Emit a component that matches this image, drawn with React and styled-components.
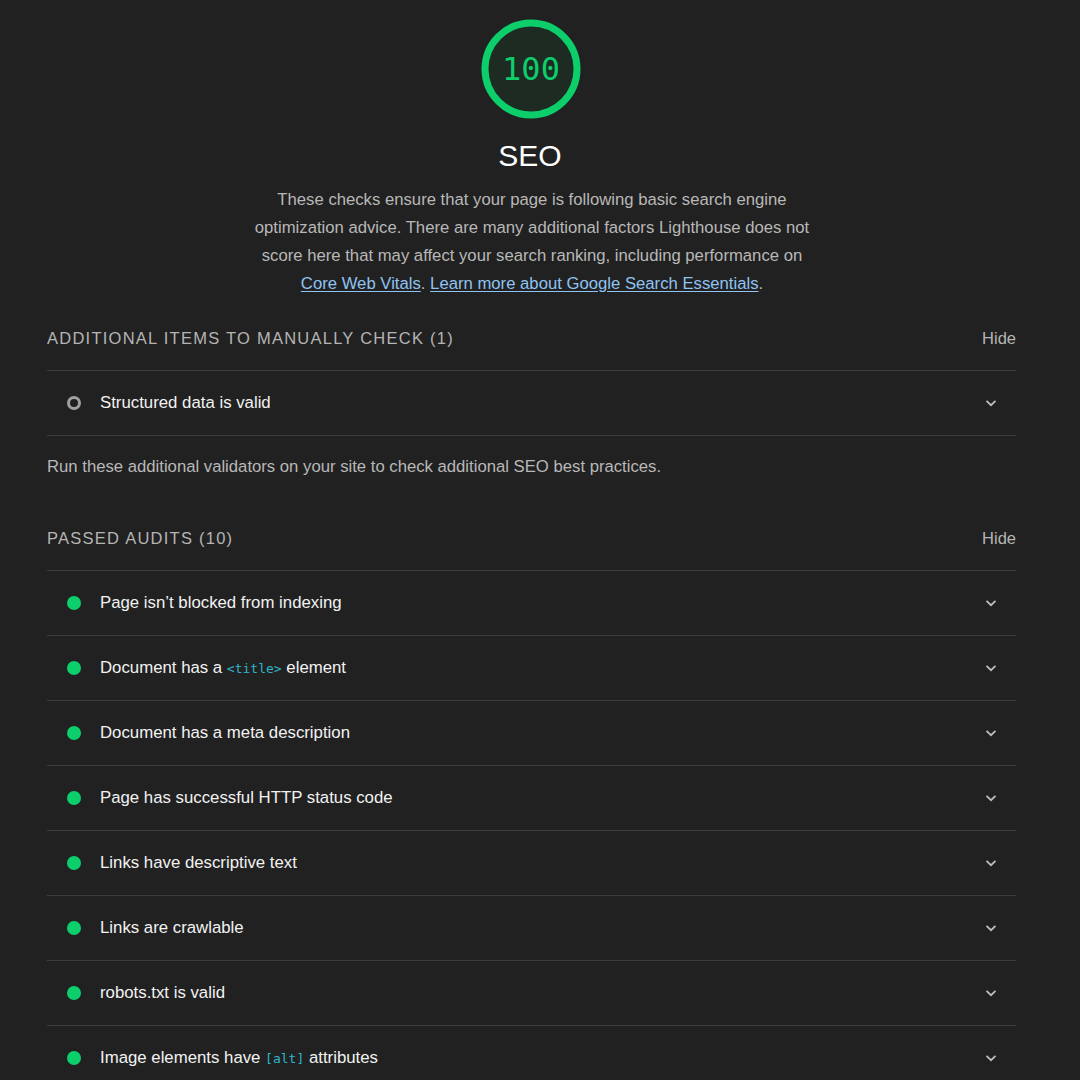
import React from "react";
import styled, { createGlobalStyle } from "styled-components";

const GlobalStyle = createGlobalStyle`
    html, body {
        margin: 0;
        padding: 0;
        background: #212121;
    }
    body {
        font-family: "Liberation Sans", Arial, sans-serif;
        color: #e0e0e0;
    }
`;

const MANUAL = [{ title: "Structured data is valid" }];

const PASSED = [
    { title: "Page isn’t blocked from indexing" },
    { title: ["Document has a ", { code: "<title>" }, " element"] },
    { title: "Document has a meta description" },
    { title: "Page has successful HTTP status code" },
    { title: "Links have descriptive text" },
    { title: "Links are crawlable" },
    { title: "robots.txt is valid" },
    { title: ["Image elements have ", { code: "[alt]" }, " attributes"] },
];

function Chevron() {
    return (
        <svg width="14" height="14" viewBox="0 0 14 14" fill="none">
            <path d="M2.5 4.8 L7 9.2 L11.5 4.8" stroke="#bdbdbd" strokeWidth="1.8" />
        </svg>
    );
}

function Title({ title }) {
    if (typeof title === "string") return title;
    return title.map((part, i) =>
        typeof part === "string" ? <span key={i}>{part}</span> : <Code key={i}>{part.code}</Code>
    );
}

function AuditRow({ audit, manual }) {
    return (
        <Row>
            <Marker $manual={manual} />
            <RowTitle>
                <Title title={audit.title} />
            </RowTitle>
            <ChevronBox>
                <Chevron />
            </ChevronBox>
        </Row>
    );
}

export default function App() {
    return (
        <>
            <GlobalStyle />
            <Page>
                <Header>
                    <Gauge>
                        <svg width="100" height="100" viewBox="0 0 100 100">
                            <circle cx="50" cy="50" r="46" fill="#1d2b23" stroke="#0cce6b" strokeWidth="7" />
                        </svg>
                        <GaugeValue>100</GaugeValue>
                    </Gauge>
                    <CategoryTitle>SEO</CategoryTitle>
                    <Description>
                        These checks ensure that your page is following basic search engine
                        optimization advice. There are many additional factors Lighthouse does not
                        score here that may affect your search ranking, including performance on{" "}
                        <Link href="#">Core Web Vitals</Link>. <Link href="#">Learn more about Google Search Essentials</Link>.
                    </Description>
                </Header>

                <Section>
                    <SectionHeader>
                        <SectionTitle>Additional items to manually check (1)</SectionTitle>
                        <HideLink>Hide</HideLink>
                    </SectionHeader>
                    <List>
                        {MANUAL.map((a, i) => (
                            <AuditRow key={i} audit={a} manual />
                        ))}
                    </List>
                    <SectionNote>Run these additional validators on your site to check additional SEO best practices.</SectionNote>
                </Section>

                <Section>
                    <SectionHeader>
                        <SectionTitle>Passed audits (10)</SectionTitle>
                        <HideLink>Hide</HideLink>
                    </SectionHeader>
                    <List>
                        {PASSED.map((a, i) => (
                            <AuditRow key={i} audit={a} />
                        ))}
                    </List>
                </Section>
            </Page>
        </>
    );
}

// PAGE *******************************************************

const Page = styled.div`
    width: 969px;
    margin-left: 47px;
    padding-top: 19px;
    height: 1061px;
    overflow: hidden;
`;

// HEADER *******************************************************

const Header = styled.div`
    display: flex;
    flex-direction: column;
    align-items: center;
`;

const Gauge = styled.div`
    position: relative;
    width: 100px;
    height: 100px;
    margin-left: -1px;

    svg {
        display: block;
    }
`;

const GaugeValue = styled.div`
    position: absolute;
    inset: 0;
    display: flex;
    align-items: center;
    justify-content: center;
    font-family: "DejaVu Sans Mono", "Liberation Mono", monospace;
    font-size: 32px;
    color: #0cce6b;
`;

const CategoryTitle = styled.div`
    margin-top: 19px;
    font-size: 30px;
    line-height: 36px;
    color: #ffffff;
    margin-left: -3px;
`;

const Description = styled.p`
    margin: 12px 0 0 1px;
    width: 580px;
    text-align: center;
    font-size: 16.7px;
    line-height: 28px;
    color: #b8b8b8;
`;

const Link = styled.a`
    color: #8fc3f2;
    text-decoration: underline;
    text-underline-offset: 2px;
`;

// SECTIONS *******************************************************

const Section = styled.section`
    margin-top: 24px;

    & + & {
        margin-top: 45px;
    }
`;

const SectionHeader = styled.div`
    display: flex;
    justify-content: space-between;
    align-items: center;
    height: 32px;
`;

const SectionTitle = styled.div`
    text-transform: uppercase;
    letter-spacing: 1.25px;
    font-size: 16.5px;
    color: #b5b5b5;
`;

const HideLink = styled.div`
    font-size: 16.5px;
    color: #b5b5b5;
`;

const List = styled.div`
    margin-top: 16px;
    border-top: 1px solid #3c3c3c;
`;

const SectionNote = styled.div`
    margin-top: 21px;
    font-size: 16.7px;
    color: #b8b8b8;
`;

// ROWS *******************************************************

const Row = styled.div`
    display: flex;
    align-items: center;
    height: 64px;
    border-bottom: 1px solid #3c3c3c;
`;

const Marker = styled.span`
    box-sizing: border-box;
    width: 14px;
    height: 14px;
    border-radius: 50%;
    margin-left: 20px;
    margin-right: 19px;
    background: ${(p) => (p.$manual ? "transparent" : "#0cce6b")};
    border: ${(p) => (p.$manual ? "3px solid #a0a0a0" : "none")};
`;

const RowTitle = styled.div`
    flex: 1;
    font-size: 16.8px;
    color: #f2f2f2;
`;

const Code = styled.code`
    font-family: "DejaVu Sans Mono", "Liberation Mono", monospace;
    font-size: 13px;
    color: #2fb5c9;
`;

const ChevronBox = styled.div`
    display: flex;
    align-items: center;
    margin-right: 18px;
`;
